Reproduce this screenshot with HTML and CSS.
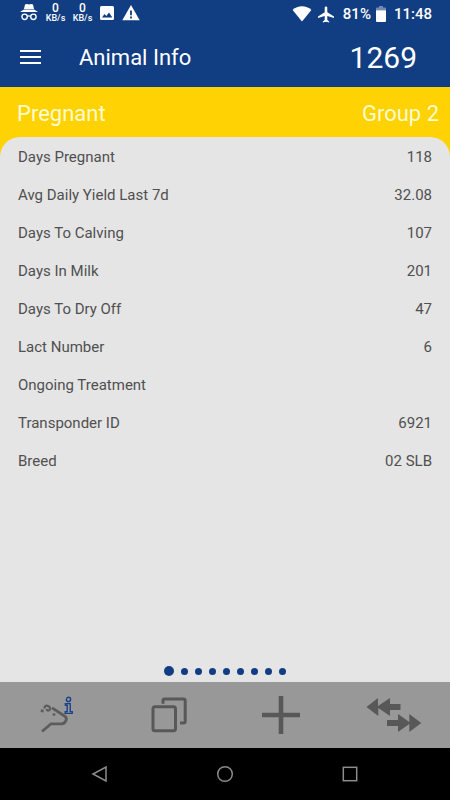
FILE: index.html
```html
<!DOCTYPE html>
<html lang="en">
<head>
    <meta charset="UTF-8">
    <meta name="viewport" content="width=device-width, initial-scale=1.0">
    <title>Animal Info</title>
    <link rel="stylesheet" href="styles.css">
</head>
<body>
    <div class="status-bar">
        <div class="status-left">
            <svg width="18" height="18" viewBox="0 0 18 18" fill="#fff">
                <path d="M5 0.5 L7 0 L9 0.6 L11 0 L13 0.5 L14 5 H4 Z M3.8 5.6 H14.2 L18 8 H0 Z"/>
                <g fill="none" stroke="#fff" stroke-width="1.4">
                    <circle cx="4.6" cy="12.8" r="2.7"/>
                    <circle cx="13.4" cy="12.8" r="2.7"/>
                    <path d="M7.2 12.4 Q9 11.4 10.8 12.4"/>
                </g>
            </svg>
            <div class="speed"><b>0</b><span>KB/s</span></div>
            <div class="speed"><b>0</b><span>KB/s</span></div>
            <svg width="14" height="14" viewBox="0 0 14 14">
                <rect width="14" height="14" rx="1.5" fill="#fff"/>
                <path d="M2 11.5 L4.5 8 L6.3 10 L9 6.5 L12.3 11.5 Z" fill="#113d82"/>
            </svg>
            <svg width="18" height="16" viewBox="0 0 18 16">
                <path d="M9 0 L17.7 15.3 H0.3 Z" fill="#fff"/>
                <path d="M8.1 5.5 H9.9 V10.3 H8.1 Z M8.1 11.6 H9.9 V13.4 H8.1 Z" fill="#113d82"/>
            </svg>
        </div>
        <div class="status-right">
            <svg class="wifi" width="20" height="16" viewBox="0 0 20 16" fill="#fff">
                <path d="M10 15.6 L0.6 4 Q4.6 0.3 10 0.3 T19.4 4 Z"/>
            </svg>
            <svg class="plane" width="16" height="17" viewBox="0 0 16 17" fill="#fff">
                <path d="M8 0.4 C8.8 0.4 9.3 1 9.3 1.8 V6.3 L16 10.4 V12 L9.3 9.9 V14 L11.2 15.4 V16.6 L8 15.7 L4.8 16.6 V15.4 L6.7 14 V9.9 L0 12 V10.4 L6.7 6.3 V1.8 C6.7 1 7.2 0.4 8 0.4 Z"/>
            </svg>
            <span>81%</span>
            <svg class="battery" width="10" height="16" viewBox="0 0 10 16" fill="#fff">
                <path d="M3 0 H7 V1.6 H9 Q10 1.6 10 2.6 V4.2 H0 V2.6 Q0 1.6 1 1.6 H3 Z" opacity="0.4"/>
                <path d="M0 4.2 H10 V15 Q10 16 9 16 H1 Q0 16 0 15 Z"/>
            </svg>
            <span>11:48</span>
        </div>
    </div>

    <header class="app-bar">
        <button class="menu" aria-label="Menu">
            <svg width="21" height="16" viewBox="0 0 21 16" stroke="#fff" stroke-width="2">
                <path d="M0 1 H21 M0 7 H21 M0 13 H21"/>
            </svg>
        </button>
        <h1>Animal Info</h1>
        <span class="animal-number">1269</span>
    </header>

    <main class="content">
        <div class="group-bar">
            <span>Pregnant</span>
            <span>Group 2</span>
        </div>
        <section class="panel">
            <table>
                <tr><th scope="row">Days Pregnant</th><td>118</td></tr>
                <tr><th scope="row">Avg Daily Yield Last 7d</th><td>32.08</td></tr>
                <tr><th scope="row">Days To Calving</th><td>107</td></tr>
                <tr><th scope="row">Days In Milk</th><td>201</td></tr>
                <tr><th scope="row">Days To Dry Off</th><td>47</td></tr>
                <tr><th scope="row">Lact Number</th><td>6</td></tr>
                <tr><th scope="row">Ongoing Treatment</th><td></td></tr>
                <tr><th scope="row">Transponder ID</th><td>6921</td></tr>
                <tr><th scope="row">Breed</th><td>02 SLB</td></tr>
            </table>
            <div class="dots">
                <button class="dot active" aria-label="Page 1"></button>
                <button class="dot" aria-label="Page 2"></button>
                <button class="dot" aria-label="Page 3"></button>
                <button class="dot" aria-label="Page 4"></button>
                <button class="dot" aria-label="Page 5"></button>
                <button class="dot" aria-label="Page 6"></button>
                <button class="dot" aria-label="Page 7"></button>
                <button class="dot" aria-label="Page 8"></button>
                <button class="dot" aria-label="Page 9"></button>
            </div>
        </section>
    </main>

    <nav class="tab-bar">
        <button aria-label="Animal info">
            <svg width="36" height="38" viewBox="0 0 36 38" fill="none" stroke="#5c5c5c" stroke-width="2.8">
                <!-- cow head -->
                <path d="M4 35.5 L13 27.8 H23.5 Q27 27.8 28.3 23.5 Q28.8 21.3 26.5 20 L14 11.8"/>
                <path d="M6.5 12.5 Q6.5 9.2 9.5 9.8 Q12.8 10.8 11.8 13.8 Q10 15.6 8.2 13.2" stroke-width="2.2"/>
                <path d="M2.8 14.6 L5.6 15.2" stroke-width="2.8"/>
                <circle cx="16" cy="18.6" r="1.4" fill="#5c5c5c" stroke="none"/>
                <!-- info mark -->
                <g stroke="#1b418a" stroke-width="1.4">
                    <circle cx="30.5" cy="3.4" r="2.1"/>
                    <path d="M27.4 7.6 H32.2 V15.6 H34.2 V17.4 H27.2 V15.6 H29.2 V9.2 H27.4 Z"/>
                </g>
            </svg>
        </button>
        <button aria-label="Copy">
            <svg width="36" height="36" viewBox="0 0 36 36" fill="none" stroke="#585858" stroke-width="3">
                <rect x="2" y="9.8" width="22.5" height="24" rx="2"/>
                <path d="M12 6.8 V3.5 Q12 2 13.5 2 H32.5 Q34.2 2 34.2 3.5 V24.2 Q34.2 26 32.5 26 H29"/>
            </svg>
        </button>
        <button aria-label="Add">
            <svg width="38" height="38" viewBox="0 0 38 38" stroke="#585858" stroke-width="4.6">
                <path d="M19 0 V38 M0 19 H38"/>
            </svg>
        </button>
        <button aria-label="Transfer">
            <svg width="56" height="36" viewBox="0 0 56 36" fill="#585858">
                <path d="M0.5 10 L12 1 V9 L24 1 V7 H34.5 V13 H24 V19 L12.3 11 V19 Z"/>
                <path d="M55.3 26 L43.3 35 V27 L32 35 V29 H21 V23 H32 V17 L43.3 25 V17 Z"/>
            </svg>
        </button>
    </nav>

    <nav class="system-bar">
        <button aria-label="Back">
            <svg width="18" height="18" viewBox="0 0 18 18" fill="none" stroke="#8c8c8c" stroke-width="1.5">
                <path d="M15 2 V16 L2 9 Z"/>
            </svg>
        </button>
        <button aria-label="Home">
            <svg width="18" height="18" viewBox="0 0 18 18" fill="none" stroke="#8c8c8c" stroke-width="1.5">
                <circle cx="9" cy="9" r="7.3"/>
            </svg>
        </button>
        <button aria-label="Recent apps">
            <svg width="18" height="18" viewBox="0 0 18 18" fill="none" stroke="#8c8c8c" stroke-width="1.5">
                <rect x="2.3" y="2.3" width="13.4" height="13.4"/>
            </svg>
        </button>
    </nav>
</body>
</html>
```

FILE: styles.css
```css
body {
    font-family: Roboto, sans-serif;
    background-color: #000;
    color: #fff;
    display: flex;
    flex-direction: column;
    min-height: 100vh;
    margin: 0;
}

button {
    background: none;
    border: none;
    padding: 0;
    cursor: pointer;
}

svg {
    display: block;
}

.status-bar {
    background-color: #113d82;
    display: flex;
    justify-content: space-between;
    align-items: center;
    box-sizing: border-box;
    height: 28px;
    padding: 0 18px 2px 20px;
}

.status-left,
.status-right {
    display: flex;
    align-items: center;
}

.status-left {
    gap: 8px;
}

.status-right {
    font-size: 15px;
    font-weight: 500;
    padding-top: 2px;
}

.speed {
    display: flex;
    flex-direction: column;
    align-items: center;
    width: 19px;
    font-size: 9px;
    font-weight: 500;
    line-height: 9px;
}

.speed b {
    font-size: 12px;
    font-weight: 500;
    line-height: 11px;
}

.wifi {
    margin-right: 6px;
}

.plane {
    margin-right: 9px;
}

.battery {
    margin: 0 8px 0 5px;
}

.app-bar {
    background-color: #113d82;
    display: flex;
    align-items: center;
    height: 59px;
    padding: 0 33px 0 20px;
}

.app-bar h1 {
    flex: 1;
    margin: 0 0 0 38px;
    font-size: 22px;
    font-weight: 400;
}

.animal-number {
    font-size: 30px;
}

.content {
    background-color: #ffd203;
    display: flex;
    flex: 1;
    flex-direction: column;
}

.group-bar {
    display: flex;
    justify-content: space-between;
    align-items: center;
    box-sizing: border-box;
    height: 50px;
    padding: 2px 11px 0 17px;
    color: #fffbd0;
    font-size: 22px;
}

.panel {
    background-color: #e5e5e5;
    border-radius: 20px 20px 0 0;
    display: flex;
    flex: 1;
    flex-direction: column;
    justify-content: space-between;
    padding: 1px 18px 6px;
    color: #505050;
}

table {
    width: 100%;
    border-collapse: collapse;
    font-size: 15px;
}

th,
td {
    height: 38px;
    padding: 0;
    font-weight: 400;
    text-align: left;
}

td {
    text-align: right;
}

.dots {
    display: flex;
    justify-content: center;
    align-items: center;
    gap: 7px;
}

.dot {
    background-color: #113d82;
    border-radius: 50%;
    width: 7px;
    height: 7px;
}

.dot.active {
    width: 10px;
    height: 10px;
}

.tab-bar {
    background-color: #989898;
    display: grid;
    grid-template-columns: repeat(4, 1fr);
    height: 66px;
}

.tab-bar button,
.system-bar button {
    display: flex;
    justify-content: center;
    align-items: center;
}

.system-bar {
    display: grid;
    grid-template-columns: repeat(3, 1fr);
    height: 52px;
    padding: 0 38px;
}
```
